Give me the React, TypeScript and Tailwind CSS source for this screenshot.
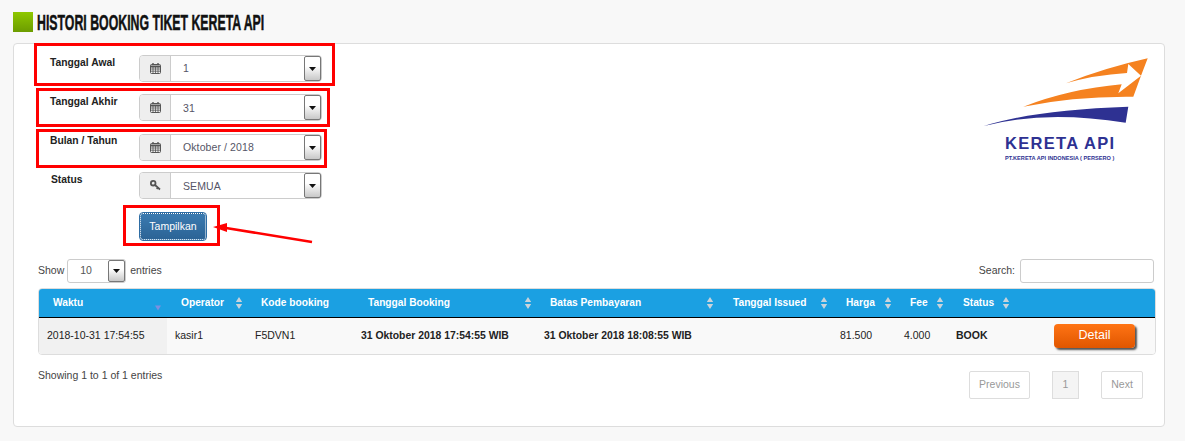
const columns = [
  { label: 'Waktu', width: 'w-[128px]', pad: 'pl-[14px]', sort: 'down', sortPos: 'right-[5px]' },
  { label: 'Operator', width: 'w-[80px]', pad: 'pl-[14px]', sort: 'both', sortPos: 'right-[4px]' },
  { label: 'Kode booking', width: 'w-[106px]', pad: 'pl-[14px]', sort: 'none', sortPos: '' },
  { label: 'Tanggal Booking', width: 'w-[183px]', pad: 'pl-[15px]', sort: 'both', sortPos: 'right-[4px]' },
  { label: 'Batas Pembayaran', width: 'w-[189px]', pad: 'pl-[14px]', sort: 'both', sortPos: 'right-[11px]' },
  { label: 'Tanggal Issued', width: 'w-[107px]', pad: 'pl-[8px]', sort: 'both', sortPos: 'right-[4px]' },
  { label: 'Harga', width: 'w-[64px]', pad: 'pl-[14px]', sort: 'both', sortPos: 'right-[4px]' },
  { label: 'Fee', width: 'w-[52px]', pad: 'pl-[14px]', sort: 'both', sortPos: 'right-[4px]' },
  { label: 'Status', width: 'w-[66px]', pad: 'pl-[15px]', sort: 'both', sortPos: 'right-[4px]' },
  { label: '', width: 'w-[141px]', pad: '', sort: 'none', sortPos: '' },
]

function SortIcon({ sort, pos }: { sort: string; pos: string }) {
  if (sort === 'none') return null
  if (sort === 'down') {
    return (
      <svg className={`absolute top-[10px] ${pos}`} width="8" height="12" viewBox="0 0 8 12">
        <path d="M1 6.5h6l-3 5z" fill="#7d8fe0" />
      </svg>
    )
  }
  return (
    <svg className={`absolute top-[8px] ${pos}`} width="8" height="12" viewBox="0 0 8 12">
      <path d="M4 0l3.2 5H0.8zM4 12l3.2-5H0.8z" fill="#c9d3db" />
    </svg>
  )
}

function CalendarIcon() {
  return (
    <svg width="11" height="11" viewBox="0 0 11 11" fill="none" stroke="#555" strokeWidth="1">
      <rect x="0.5" y="1.5" width="10" height="9" rx="1" />
      <path d="M0.5 3.5h10" strokeWidth="2" />
      <path d="M0.5 6h10M0.5 8.2h10M3 4v6.5M5.5 4v6.5M8 4v6.5" strokeWidth="0.8" />
      <path d="M3 0v2M8 0v2" strokeWidth="1.4" />
    </svg>
  )
}

function KeyIcon() {
  return (
    <svg width="11" height="11" viewBox="0 0 11 11" fill="none" stroke="#555">
      <circle cx="3.2" cy="3.2" r="2.3" strokeWidth="1.8" />
      <path d="M5 5l5 4.5M8 7.6l-1.3 1.4" strokeWidth="1.7" />
    </svg>
  )
}

function SelectArrow({ size }: { size: string }) {
  return (
    <div className={`flex w-[17px] items-center justify-center rounded-[2px] border border-[#777] bg-gradient-to-b from-white from-40% to-[#c8c8c8] ${size}`}>
      <svg width="7" height="4" viewBox="0 0 7 4">
        <path d="M0 0h7L3.5 4z" fill="#111" />
      </svg>
    </div>
  )
}

function SelectField({ label, value, icon, labelClass, valueClass = '' }: { label: string; value: string; icon: 'calendar' | 'key'; labelClass: string; valueClass?: string }) {
  return (
    <div className="flex h-[27px] items-start">
      <div className={`w-[89px] text-[10.3px] font-bold leading-[14px] text-[#222] ${labelClass}`}>{label}</div>
      <div className="flex h-[27px] w-[183px] rounded-[4px] border border-[#ccc] bg-white">
        <div className="flex w-[31px] items-center justify-center rounded-l-[3px] border-r border-[#ccc] bg-[#eee]">
          {icon === 'calendar' ? <CalendarIcon /> : <KeyIcon />}
        </div>
        <div className="flex flex-1 items-center justify-between pl-[12px]">
          <span className={`text-[10.5px] tracking-[0.1px] text-[#555566] ${valueClass}`}>{value}</span>
          <SelectArrow size="h-[25px]" />
        </div>
      </div>
    </div>
  )
}

function Logo() {
  return (
    <div className="flex w-[164px] flex-col">
      <svg width="164" height="69" viewBox="0 0 164 69">
        <path d="M82 25.3Q120 10 163.7 0.3L157 17.7L144.3 6L143 15Q110 17 82 25.3Z" fill="#f58220" />
        <path d="M157 17.7L149.3 38.7Q90 38 39.3 48.7Q85 31 137.7 26.3L134.3 35.3Z" fill="#f58220" />
        <path d="M0 68Q50 52 144.3 48.7L141.7 64.7Q60 52 0 68Z" fill="#2e3192" />
      </svg>
      <div className="mt-[9px] pl-[21px] text-[16.5px] leading-[14px] font-bold tracking-[1.3px] whitespace-nowrap text-[#2e3192]">KERETA API</div>
      <div className="mt-[4px] pl-[21px] text-[5.6px] leading-[8px] font-bold whitespace-nowrap text-[#2e3192]">PT.KERETA API INDONESIA ( PERSERO )</div>
    </div>
  )
}

export default function App() {
  return (
    <div className="h-[441px] w-[1185px] overflow-hidden bg-[#f8f8f8] font-['Liberation_Sans',Arial,sans-serif] text-[10.5px] text-[#333]">
      <div className="flex h-[43px] items-start gap-[4px] pl-[13px] pt-[12px]">
        <div className="h-[20px] w-[20px] shrink-0 bg-gradient-to-b from-[#8fc800] to-[#6c9c00]" />
        <h1 className="origin-left scale-x-[0.56] text-[22px] leading-[22px] font-bold whitespace-nowrap text-[#111] [-webkit-text-stroke:0.5px_#111]">HISTORI BOOKING TIKET KERETA API</h1>
      </div>

      <div className="relative mx-[13px] h-[384px] w-[1152px] rounded-[4px] border border-[#ddd] bg-white">
        <div className="flex justify-between pt-[11px] pl-[36px] pr-[16px]">
          <div className="flex flex-col">
            <div className="flex flex-col gap-[12px]">
              <SelectField label="Tanggal Awal" value="1" icon="calendar" labelClass="pt-[1px]" />
              <SelectField label="Tanggal Akhir" value="31" icon="calendar" labelClass="pt-[1px]" valueClass="translate-y-[1px]" />
              <div className="pt-[1px]">
                <SelectField label="Bulan / Tahun" value="Oktober / 2018" icon="calendar" labelClass="" />
              </div>
              <div className="-mt-[1px]">
                <SelectField label="Status" value="SEMUA" icon="key" labelClass="pl-[1px] pt-[1px]" valueClass="translate-y-[1px]" />
              </div>
            </div>
            <div className="mt-[14px] pl-[90px]">
              <button className="h-[27px] w-[66px] rounded-[3px] border border-dotted border-white bg-gradient-to-b from-[#3a7ab0] to-[#2c6496] text-[10.5px] text-white outline outline-[#2e6da4]">
                Tampilkan
              </button>
            </div>
          </div>
          <div className="pt-[3px]">
            <Logo />
          </div>
        </div>

        <div className="mt-[19px] flex items-start justify-between pl-[24px] pr-[10px]">
          <div className="flex items-center gap-[3px] text-[#444]">
            <span>Show</span>
            <div className="flex h-[24px] w-[59px] items-center justify-between rounded-[3px] border border-[#ccc] pl-[12px]">
              <span className="text-[#555]">10</span>
              <SelectArrow size="h-[22px]" />
            </div>
            <span className="pl-[1px]">entries</span>
          </div>
          <div className="flex items-center gap-[5px] text-[#444]">
            <span>Search:</span>
            <div className="h-[24px] w-[134px] rounded-[3px] border border-[#ccc] bg-white" />
          </div>
        </div>

        <div className="mx-[24px] mt-[5px] w-[1118px] overflow-hidden rounded-[4px] border border-[#ddd]">
          <table className="w-full table-fixed border-collapse">
            <thead>
              <tr className="h-[28px] border-b border-b-black bg-[#1ba0e2]">
                {columns.map((col) => (
                  <th key={col.label} className={`relative ${col.width} ${col.pad} text-left text-[10.2px] font-bold text-white`}>
                    {col.label}
                    <SortIcon sort={col.sort} pos={col.sortPos} />
                  </th>
                ))}
              </tr>
            </thead>
            <tbody>
              <tr className="h-[37px] bg-[#f9f9f9] text-[10.5px] text-[#222]">
                <td className="bg-[#f1f1f1] pl-[8px]">2018-10-31 17:54:55</td>
                <td className="pl-[8px]">kasir1</td>
                <td className="pl-[8px]">F5DVN1</td>
                <td className="pl-[8px] text-[10.4px] font-bold whitespace-nowrap">31 Oktober 2018 17:54:55 WIB</td>
                <td className="pl-[8px] text-[10.4px] font-bold whitespace-nowrap">31 Oktober 2018 18:08:55 WIB</td>
                <td />
                <td className="pl-[8px]">81.500</td>
                <td className="pl-[8px]">4.000</td>
                <td className="pl-[8px] font-bold">BOOK</td>
                <td className="pl-[40px]">
                  <button className="h-[24px] w-[81px] rounded-[4px] bg-gradient-to-b from-[#ff7414] to-[#e05600] text-[12.5px] text-white shadow-[2px_2px_2px_#555]">
                    Detail
                  </button>
                </td>
              </tr>
            </tbody>
          </table>
        </div>

        <div className="flex items-start justify-between pl-[24px] pr-[21px]">
          <div className="mt-[13px] text-[#444]">Showing 1 to 1 of 1 entries</div>
          <div className="mt-[16px] flex text-[#999]">
            <div className="flex h-[28px] w-[61px] items-center justify-center rounded-[2px] border border-[#ddd]">Previous</div>
            <div className="ml-[22px] flex h-[28px] w-[27px] items-center justify-center border border-[#ddd] bg-[#f4f4f4]">1</div>
            <div className="ml-[22px] flex h-[28px] w-[42px] items-center justify-center rounded-[2px] border border-[#ddd]">Next</div>
          </div>
        </div>

        {/* annotations drawn over the screenshot */}
        <div className="absolute left-[20px] top-[-1px] h-[43px] w-[301px] border-[3px] border-[#f00]" />
        <div className="absolute left-[22px] top-[44px] h-[39px] w-[294px] border-[3px] border-[#f00]" />
        <div className="absolute left-[22px] top-[85px] h-[39px] w-[291px] border-[3px] border-[#f00]" />
        <div className="absolute left-[109px] top-[161px] h-[41px] w-[97px] border-[3px] border-[#f00]" />
        <svg className="absolute left-[198px] top-[175px]" width="105" height="30" viewBox="0 0 105 30">
          <path d="M100 23L14 9" stroke="#f00" strokeWidth="2.5" fill="none" />
          <path d="M1 8L15 4L15 13z" fill="#f00" />
        </svg>
      </div>
    </div>
  )
}
